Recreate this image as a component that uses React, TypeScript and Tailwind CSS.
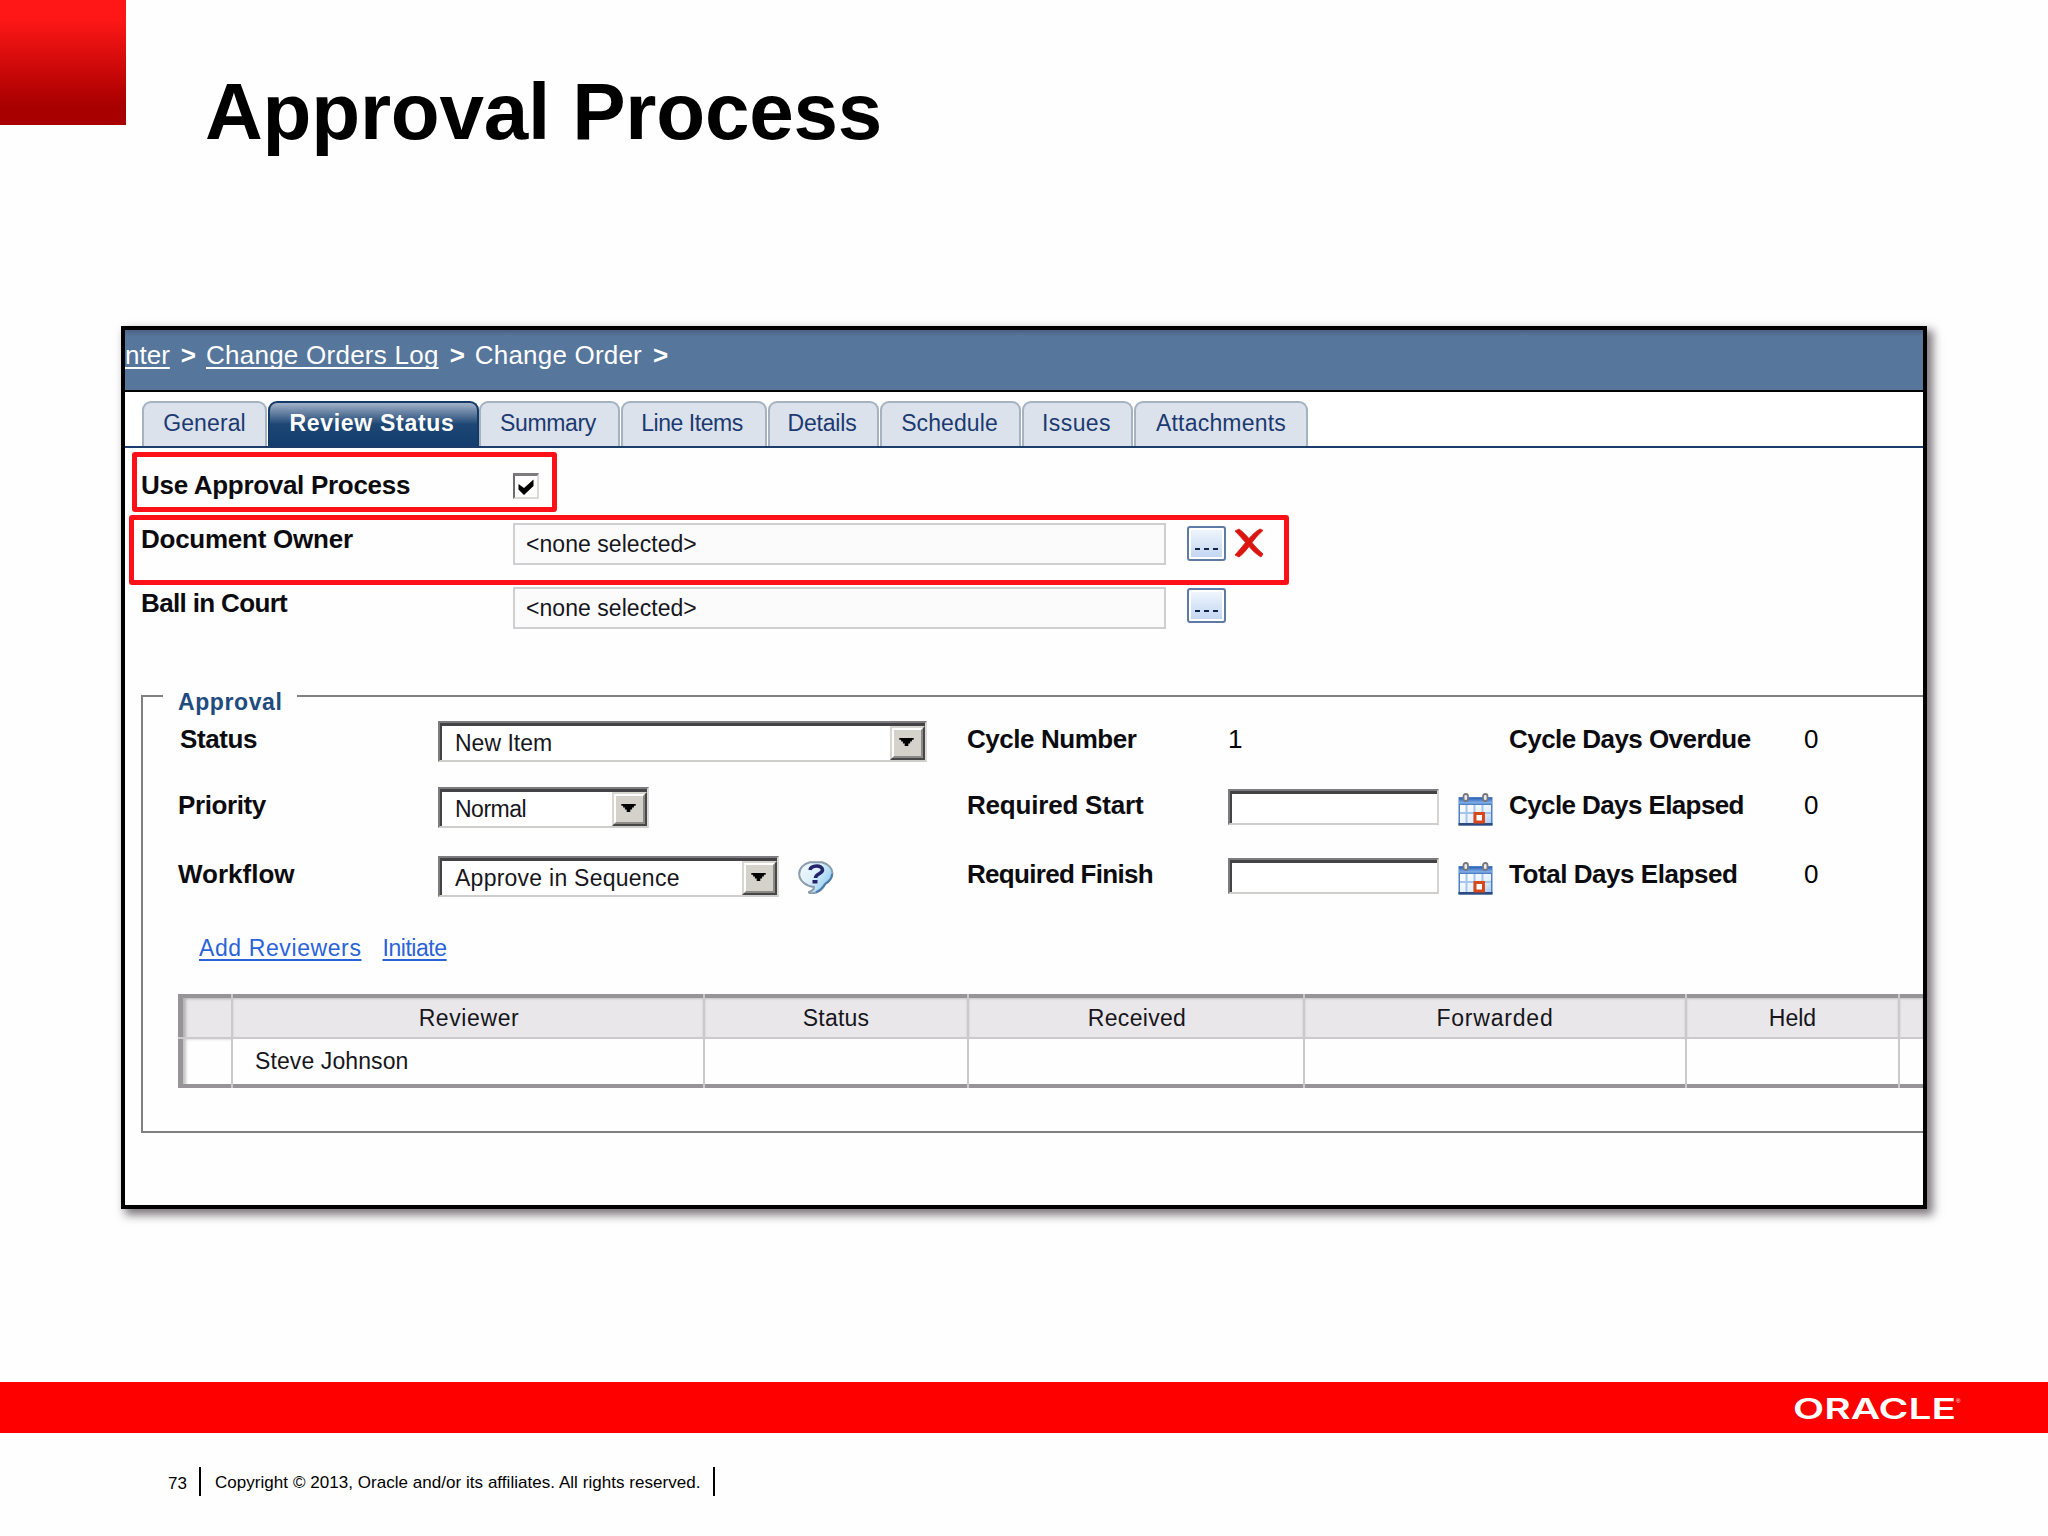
import type { ReactNode } from 'react';
import clsx from 'clsx';

const tabs = [
  { label: 'General', className: 'w-[125px] tracking-[0.1px]' },
  { label: 'Review Status', className: 'w-[211px] pr-[3px] tracking-[0.7px]', active: true },
  { label: 'Summary', className: 'w-[141px] -ml-px pr-[3px] tracking-[-0.35px]' },
  { label: 'Line Items', className: 'w-[146px] pr-[4px] tracking-[-0.45px]' },
  { label: 'Details', className: 'w-[111px] pr-[3px] tracking-[-0.2px]' },
  { label: 'Schedule', className: 'w-[141px] pr-[2px] tracking-[0.1px]' },
  { label: 'Issues', className: 'w-[111px] pr-[2px] tracking-[0.4px]' },
  { label: 'Attachments', className: 'w-[174px] tracking-[0.2px]' },
];

const columns = [
  { label: '', className: '' },
  { label: 'Reviewer', className: 'pl-[2px] tracking-[0.6px]' },
  { label: 'Status', className: 'tracking-[0.2px]' },
  { label: 'Received', className: 'pl-[2px] tracking-[0.3px]' },
  { label: 'Forwarded', className: 'tracking-[0.8px]' },
  { label: 'Held', className: '' },
  { label: '', className: '' },
];

function Label({ children, className }: { children: ReactNode; className?: string }) {
  return (
    <div className={clsx('text-[26px] leading-[30px] font-bold text-[#0c0c10] whitespace-nowrap', className)}>
      {children}
    </div>
  );
}

function ReadOnlyField() {
  return (
    <div className="w-[653px] h-[42px] border-2 border-[#cfcfd1] bg-[#fbfbfc] pl-[11px] pt-[6px] text-[23px] leading-[26px] tracking-[0.05px] text-[#16161c]">
      &lt;none selected&gt;
    </div>
  );
}

function BrowseButton({ className }: { className?: string }) {
  return (
    <button className={clsx('w-[39px] h-[35px] rounded-[3px] border-2 border-[#5f7ba3] bg-white p-[2px]', className)}>
      <span className="flex items-end justify-center gap-[4px] w-full h-full pb-[7px] bg-linear-to-b from-[#eef5fd] to-[#c4d6f1]">
        <span className="w-[5px] h-[2px] bg-[#10254a]"></span>
        <span className="w-[5px] h-[2px] bg-[#10254a]"></span>
        <span className="w-[5px] h-[2px] bg-[#10254a]"></span>
      </span>
    </button>
  );
}

function Select({ value, className }: { value: string; className?: string }) {
  return (
    <div className={clsx('h-[41px] border-2 border-t-[#7d7b7d] border-l-[#7d7b7d] border-r-[#dcdad6] border-b-[#d0cecb] bg-white', className)}>
      <div className="flex justify-between h-full border-t-[3px] border-l-[2px] border-[#434245] bg-white">
        <span className="pl-[13px] pt-[4px] text-[23px] leading-[26px] text-[#16161c] whitespace-nowrap">{value}</span>
        <span className="flex items-center justify-center w-[35px] h-[34px] border-2 border-t-[#d8d6d1] border-l-[#d8d6d1] border-r-[#474747] border-b-[#474747] bg-[#d5d2cb]">
          <span className="flex items-center justify-center w-full h-full pr-[2px] pb-[2px] border-2 border-t-white border-l-white border-r-[#8c8a86] border-b-[#8c8a86]">
            <svg width="15" height="9" viewBox="0 0 16 10" className="block" fill="#000">
              <path d="M0 0h16v2h-2v2h-2v2h-2v3H6V6H4V4H2V2H0z" />
            </svg>
          </span>
        </span>
      </div>
    </div>
  );
}

function DateInput() {
  return (
    <div className="w-[211px] h-[36px] border-2 border-t-[#7d7b7d] border-l-[#7d7b7d] border-r-[#d6d4d2] border-b-[#d0cecb] bg-white">
      <div className="h-full border-t-[3px] border-l-[2px] border-[#434245]"></div>
    </div>
  );
}

function CalendarIcon({ className }: { className?: string }) {
  return (
    <svg width="35" height="33" viewBox="0 0 35 33" className={className}>
      <defs>
        <linearGradient id="cal-head" x1="0" x2="0" y1="0" y2="1">
          <stop offset="0" stopColor="#2c63b8" />
          <stop offset="1" stopColor="#8db9ee" />
        </linearGradient>
        <linearGradient id="cal-body" x1="0" x2="1" y1="0" y2="1">
          <stop offset="0" stopColor="#ffffff" />
          <stop offset="0.6" stopColor="#e6f1fd" />
          <stop offset="1" stopColor="#a9cdf5" />
        </linearGradient>
      </defs>
      <rect x="0.5" y="4" width="34" height="28.5" fill="#4f7fc4" />
      <rect x="1" y="5" width="33" height="5.5" fill="url(#cal-head)" />
      <rect x="2" y="12" width="31" height="18" fill="url(#cal-body)" />
      <path d="M8.5 12v18M16.5 12v18M24.5 12v18M2 20h31" stroke="#a3c5ee" strokeWidth="2" />
      <rect x="0.5" y="30" width="34" height="2.5" fill="#2b4a7d" />
      <rect x="17" y="20.5" width="8.5" height="8.5" fill="#fff" stroke="#d8481c" strokeWidth="3" />
      <rect x="5.5" y="1" width="4.5" height="7" rx="2.2" fill="#e8e8ea" stroke="#77777d" strokeWidth="1.8" />
      <rect x="25" y="1" width="4.5" height="7" rx="2.2" fill="#e8e8ea" stroke="#77777d" strokeWidth="1.8" />
    </svg>
  );
}

function HelpIcon({ className }: { className?: string }) {
  return (
    <svg width="36" height="33" viewBox="0 0 36 33" className={className}>
      <defs>
        <linearGradient id="help-fill" x1="0" x2="1" y1="0" y2="0.6">
          <stop offset="0" stopColor="#f4f8fb" />
          <stop offset="0.5" stopColor="#dceffb" />
          <stop offset="1" stopColor="#8fcdf5" />
        </linearGradient>
      </defs>
      <path
        d="M12 1.2h12c6 1.800 10.500 6 10.500 11 0 5-3.500 8-7 10.500-2 4-6 8-11 9.300-3 .8-6 .3-5.500-1 2.500-.8 5-2.500 5-5C8 25 1.200 20 1.200 13 1.200 7 6 2.500 12 1.200z"
        fill="url(#help-fill)"
        stroke="#8b9cab"
        strokeWidth="2"
      />
      <path d="M34 13c0 5-3.500 8-7 10-2 3.500-5 6.500-9 8.200" fill="none" stroke="#4c7aa8" strokeWidth="2" />
      <path d="M12 9c1-5 12.500-5.500 12.500 0 0 4-7 3.500-7 8" fill="none" stroke="#24246a" strokeWidth="3.600" />
      <rect x="14.500" y="19" width="5" height="3.500" fill="#24246a" />
    </svg>
  );
}

function DeleteIcon({ className }: { className?: string }) {
  return (
    <svg width="30" height="30" viewBox="0 0 30 30" className={className}>
      <path d="M1 3l4-2c4 3 7 6 10 9.500C18 7 21.500 3.500 26 1l3 1.500C25 6 21 10.500 18 14.500c3 4 7 8 11 11.500l-2 3c-5-3-8.500-6.500-12-10.500-3 4-6 7.500-10 10.500l-4-2c3.500-4 7-8 10.500-12.500C8 10.500 4.500 6.500 1 3z" fill="#d9160f" stroke="#d9160f" strokeWidth="0.800" />
    </svg>
  );
}

export default function App() {
  return (
    <div className="w-[2048px] h-[1536px] overflow-hidden bg-[#fefefe] font-['Liberation_Sans',Arial,sans-serif] text-black">
      {/* Slide title */}
      <header className="flex h-[326px]">
        <div className="w-[126px] h-[125px] bg-linear-to-b from-[#ff1717] from-15% to-[#a80000] to-85%"></div>
        <h1 className="ml-[79px] mt-[66px] text-[80px] leading-[92px] font-bold tracking-[-0.2px]">Approval Process</h1>
      </header>

      {/* Application window */}
      <main className="relative ml-[121px] w-[1806px] h-[883px] border-4 border-black bg-[#fefefe] shadow-[5px_5px_9px_1px_rgba(40,30,40,0.6)]">
        <div className="flex flex-col h-full overflow-hidden">
          <nav className="flex shrink-0 h-[62px] pt-[10px] border-b-2 border-black bg-linear-to-b from-[#4b6283] to-[#56769c] to-10% text-white text-[26px] leading-[30px] whitespace-nowrap">
            <a className="underline decoration-2 underline-offset-[3px] [text-decoration-skip-ink:none]">nter</a>
            <span className="ml-[11px] font-bold">&gt;</span>
            <a className="ml-[10px] tracking-[0.25px] underline decoration-2 underline-offset-[3px] [text-decoration-skip-ink:none]">Change Orders Log</a>
            <span className="ml-[11px] font-bold">&gt;</span>
            <span className="ml-[10px] tracking-[0.2px]">Change Order</span>
            <span className="ml-[11px] font-bold">&gt;</span>
          </nav>

          {/* Tabs */}
          <div className="flex shrink-0 items-end gap-px h-[56px] pl-[17px] border-b-2 border-[#1c3c6c] bg-white">
            {tabs.map((tab) => (
              <div
                key={tab.label}
                className={clsx(
                  'h-[45px] rounded-t-[9px] border-2 border-b-0 pt-[7px] text-center text-[23px] leading-[26px] whitespace-nowrap',
                  tab.active
                    ? 'border-[#143a68] bg-linear-to-b from-[#a3b3c8] via-[#1d4674] via-50% to-[#123d6e] font-bold text-white'
                    : 'border-[#a5b2c2] bg-[#dbe2eb] text-[#1b3a72]',
                  tab.className,
                )}
              >
                {tab.label}
              </div>
            ))}
          </div>

          {/* Document fields */}
          <div className="flex shrink-0 h-[75px] pl-[16px]">
            <Label className="w-[372px] mt-[22px] tracking-[-0.3px]">Use Approval Process</Label>
            <div className="flex items-center justify-center w-[26px] h-[26px] mt-[25px] border-2 border-t-[3px] border-t-[#7d7b7d] border-l-[#6d6b6d] border-r-[#dcdad6] border-b-[#dcdad6] bg-white">
              <svg width="18" height="18" viewBox="0 0 18 18">
                <path d="M1.500 6l5.500 4L16.500 1.500V8L7 17l-5.500-5.500z" fill="#000" />
              </svg>
            </div>
          </div>
          <div className="flex shrink-0 h-[64px] pl-[16px]">
            <Label className="w-[372px] pt-px tracking-[-0.25px]">Document Owner</Label>
            <ReadOnlyField />
            <BrowseButton className="ml-[21px] mt-[3px]" />
            <DeleteIcon className="ml-[8px] mt-[5px]" />
          </div>
          <div className="flex shrink-0 h-[108px] pl-[16px]">
            <Label className="w-[372px] mt-px tracking-[-0.65px]">Ball in Court</Label>
            <ReadOnlyField />
            <BrowseButton className="ml-[21px] mt-px" />
          </div>

          {/* Approval group */}
          <section className="shrink-0 ml-[16px] pl-[35px] pb-[43px] border-2 border-r-0 border-[#808080]">
            <div className="w-[134px] h-[26px] -mt-[8px] -ml-[15px] pl-[15px] bg-[#fefefe] text-[23px] leading-[26px] font-bold tracking-[0.6px] text-[#1f4b80]">
              Approval
            </div>
            <div className="grid grid-cols-[260px_529px_261px_281px_295px_1fr] grid-rows-[66px_69px_79px] mt-[6px]">
              <Label className="mt-[3px] ml-[2px] tracking-[-0.4px]">Status</Label>
              <Select value="New Item" className="w-[489px]" />
              <Label className="mt-[3px] tracking-[-0.45px]">Cycle Number</Label>
              <div className="mt-[3px] text-[26px] leading-[30px]">1</div>
              <Label className="mt-[3px] tracking-[-0.55px]">Cycle Days Overdue</Label>
              <div className="mt-[3px] text-[26px] leading-[30px]">0</div>

              <Label className="mt-[3px] tracking-[-0.4px]">Priority</Label>
              <Select value="Normal" className="w-[211px] tracking-[-0.5px]" />
              <Label className="mt-[3px] tracking-[-0.2px]">Required Start</Label>
              <div className="flex">
                <div className="mt-[2px]"><DateInput /></div>
                <CalendarIcon className="ml-[19px] mt-[6px]" />
              </div>
              <Label className="mt-[3px] tracking-[-0.6px]">Cycle Days Elapsed</Label>
              <div className="mt-[3px] text-[26px] leading-[30px]">0</div>

              <Label className="mt-[3px]">Workflow</Label>
              <div className="flex">
                <Select value="Approve in Sequence" className="w-[341px] tracking-[0.25px]" />
                <HelpIcon className="ml-[19px] mt-[5px]" />
              </div>
              <Label className="mt-[3px] tracking-[-0.7px]">Required Finish</Label>
              <div className="flex">
                <div className="mt-[2px]"><DateInput /></div>
                <CalendarIcon className="ml-[19px] mt-[6px]" />
              </div>
              <Label className="mt-[3px] tracking-[-0.45px]">Total Days Elapsed</Label>
              <div className="mt-[3px] text-[26px] leading-[30px]">0</div>
            </div>

            <div className="flex gap-[21px] h-[59px] pl-[21px] text-[23px] leading-[26px] text-[#2a63d8]">
              <a className="tracking-[0.6px] underline decoration-2 underline-offset-[3px]">Add Reviewers</a>
              <a className="tracking-[-0.45px] underline decoration-2 underline-offset-[3px]">Initiate</a>
            </div>

            {/* Reviewers */}
            <div className="grid grid-cols-[53px_470px_262px_334px_380px_211px_1fr] grid-rows-[43px_49px] gap-[2px] bg-[#cbc9cb] text-[23px] leading-[26px] text-[#16161c]">
              {columns.map((column, i) => (
                <div
                  key={i}
                  className={clsx(
                    'pt-[11px] text-center bg-[#e9e7e9]',
                    i === 0
                      ? 'shadow-[inset_5px_4px_0_#969496,inset_8px_5px_3px_#b5b3b5]'
                      : 'shadow-[inset_0_4px_0_#969496,inset_0_5px_2px_#c5c3c5]',
                    column.className,
                  )}
                >
                  {column.label}
                </div>
              ))}
              {columns.map((_, i) => (
                <div
                  key={i}
                  className={clsx(
                    'bg-[#fefefe]',
                    i === 0
                      ? 'shadow-[inset_5px_-4px_0_#969496,inset_8px_0_3px_#c5c3c5]'
                      : 'pl-[22px] pt-[9px] tracking-[0.1px] shadow-[inset_0_-4px_0_#969496]',
                  )}
                >
                  {i === 1 && 'Steve Johnson'}
                </div>
              ))}
            </div>
          </section>
        </div>

        {/* Callout outlines drawn over the form */}
        <div className="absolute left-[7px] top-[122px] w-[425px] h-[60px] rounded-[3px] border-5 border-[#fd1018]"></div>
        <div className="absolute left-[4px] top-[185px] w-[1160px] h-[70px] rounded-[3px] border-5 border-[#fd1018]"></div>
      </main>

      {/* Brand bar */}
      <div className="flex justify-end h-[51px] mt-[173px] pr-[85px] bg-[#fe0000]">
        <svg width="169" height="50" viewBox="0 0 169 50" fill="#fff" className="block">
          <text x="-1" y="36.500" textLength="163" lengthAdjust="spacingAndGlyphs" fontSize="28.500" fontWeight="600" className="font-['Inter',sans-serif]">
            ORACLE
          </text>
          <text x="162" y="21" fontSize="6">®</text>
        </svg>
      </div>

      <footer className="flex h-[103px] pt-[34px] pl-[168px] text-[17px] leading-[20px]">
        <span className="w-[31px] mt-[7px]">73</span>
        <span className="w-[2px] h-[29px] bg-black"></span>
        <span className="w-[512px] pl-[14px] mt-[6px] tracking-[0.04px] whitespace-nowrap">
          Copyright © 2013, Oracle and/or its affiliates. All rights reserved.
        </span>
        <span className="w-[2px] h-[29px] bg-black"></span>
      </footer>
    </div>
  );
}
